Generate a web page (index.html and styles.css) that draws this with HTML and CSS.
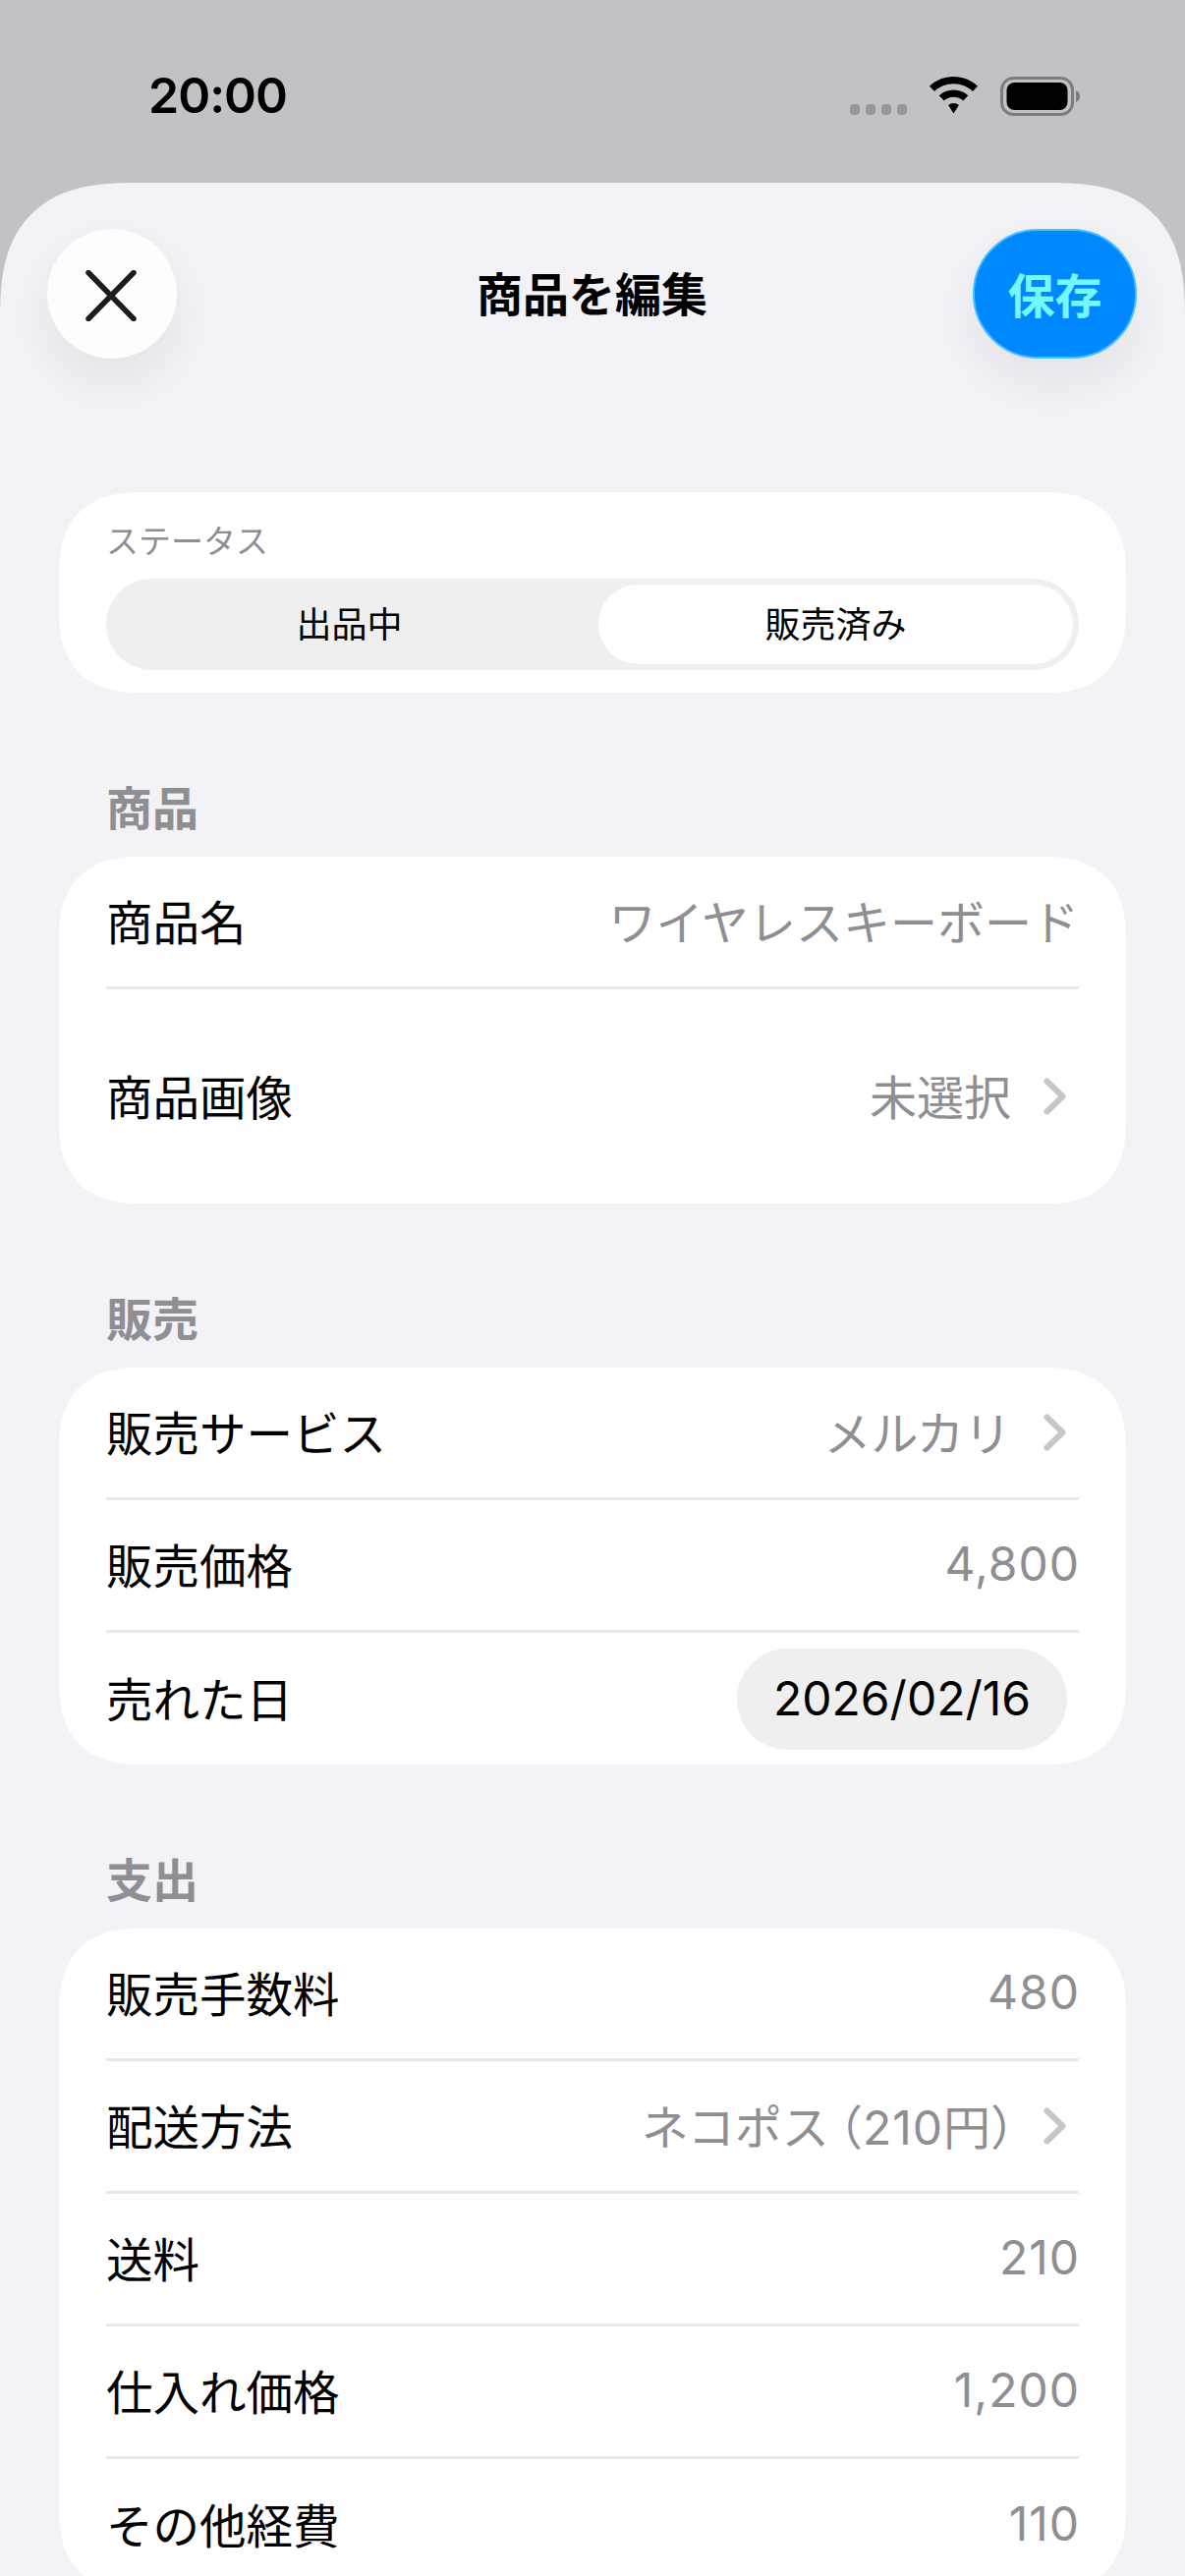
FILE: index.html
```html
<!DOCTYPE html>
<html lang="ja">
<head>
<meta charset="utf-8">
<title>商品を編集</title>
<link rel="stylesheet" href="styles.css">
</head>
<body>
<div class="status-bar">
  <span class="time">20:00</span>
  <div class="status-icons">
    <div class="dots"><i></i><i></i><i></i><i></i></div>
    <svg class="wifi" width="51" height="38" viewBox="0 0 50 38"><path d="M25 0C15.500 0 7 3.600 0.500 9.700L5.500 15C10.500 10.200 17.400 7.300 25 7.300S39.500 10.200 44.500 15L49.500 9.700C43 3.600 34.500 0 25 0Z"/><path d="M25 13.500C19.300 13.500 14.100 15.700 10.200 19.300L15.200 24.600C17.800 22.300 21.200 20.800 25 20.800S32.200 22.300 34.800 24.600L39.800 19.300C35.900 15.700 30.700 13.500 25 13.500Z"/><path d="M25 27C22.900 27 21 27.800 19.600 29L25 37.500L30.400 29C29 27.800 27.100 27 25 27Z"/></svg>
    <svg class="battery" width="82" height="40" viewBox="0 0 82 40"><rect x="1.500" y="1.500" width="72" height="37" rx="12" fill="none" stroke="#7d7d81" stroke-width="3"/><rect x="6.500" y="6" width="62" height="28" rx="8"/><path d="M77 14C79.500 15 81 17 81 20S79.500 25 77 26Z" fill="#7d7d81"/></svg>
  </div>
</div>
<main class="sheet">
  <header class="nav">
    <button class="close" aria-label="閉じる">
      <svg class="close-icon" width="52" height="52" viewBox="0 0 52 52"><path d="M3 2.500L49 49.500M49 2.500L3 49.500" fill="none" stroke="#1c1c1e" stroke-width="5.500" stroke-linecap="round"/></svg>
    </button>
    <h1 class="title">商品を編集</h1>
    <button class="save">保存</button>
  </header>

  <section class="card status-card">
    <div class="status-label">ステータス</div>
    <div class="segment">
      <div class="seg-item">出品中</div>
      <div class="seg-item seg-active">販売済み</div>
    </div>
  </section>

  <h2 class="section-title">商品</h2>
  <section class="card">
    <div class="row"><span>商品名</span><span class="value">ワイヤレスキーボード</span></div>
    <div class="row row-tall"><span>商品画像</span><span class="value">未選択<svg class="chev" width="24" height="38" viewBox="0 0 24 38"><path d="M3.500 3.500L19.500 19L3.500 34.500" fill="none" stroke="#c6c6c8" stroke-width="6" stroke-linecap="round" stroke-linejoin="round"/></svg></span></div>
  </section>

  <h2 class="section-title">販売</h2>
  <section class="card">
    <div class="row"><span>販売サービス</span><span class="value">メルカリ<svg class="chev" width="24" height="38" viewBox="0 0 24 38"><path d="M3.500 3.500L19.500 19L3.500 34.500" fill="none" stroke="#c6c6c8" stroke-width="6" stroke-linecap="round" stroke-linejoin="round"/></svg></span></div>
    <div class="row"><span>販売価格</span><span class="value num">4,800</span></div>
    <div class="row row-date"><span class="date-label">売れた日</span><span class="date">2026/02/16</span></div>
  </section>

  <h2 class="section-title">支出</h2>
  <section class="card">
    <div class="row"><span>販売手数料</span><span class="value num">480</span></div>
    <div class="row"><span>配送方法</span><span class="value"><span class="value-text">ネコポス<span class="paren paren-open">（</span><span class="inline-num">210</span>円<span class="paren paren-close">）</span></span><svg class="chev" width="24" height="38" viewBox="0 0 24 38"><path d="M3.500 3.500L19.500 19L3.500 34.500" fill="none" stroke="#c6c6c8" stroke-width="6" stroke-linecap="round" stroke-linejoin="round"/></svg></span></div>
    <div class="row"><span>送料</span><span class="value num">210</span></div>
    <div class="row"><span>仕入れ価格</span><span class="value num">1,200</span></div>
    <div class="row"><span>その他経費</span><span class="value num">110</span></div>
  </section>
</main>
</body>
</html>
```
FILE: styles.css
```css
* { box-sizing: border-box; }
html, body { margin: 0; height: 2622px; overflow: hidden; }
body {
  background: #c1c1c6;
  color: #000;
  font-family: Inter, "Noto Sans CJK JP", sans-serif;
}
.status-bar {
  height: 186px;
  padding: 64px 106px 0 151px;
  display: flex;
  justify-content: space-between;
  align-items: flex-start;
}
.time { font-size: 50px; font-weight: 600; line-height: 66px; letter-spacing: -1px; }
.status-icons { display: flex; align-items: flex-start; gap: 22px; padding-top: 14px; }
.dots { display: flex; gap: 6px; padding-top: 28px; }
.dots i { width: 10px; height: 11px; border-radius: 4px; background: #98989c; }
.sheet {
  height: 2436px;
  background: #f2f2f7;
  border-radius: 138px 138px 0 0;
  corner-shape: superellipse(1.4);
  padding: 47px 60px 0;
  overflow: hidden;
}
.nav {
  height: 132px;
  margin: 0 -11px 136px -12px;
  display: grid;
  grid-template-columns: 1fr auto 1fr;
  align-items: center;
}
.close, .save {
  border: 0;
  padding: 0;
  height: 132px;
  border-radius: 66px;
  font-family: inherit;
  box-shadow: 0 22px 56px rgba(0, 0, 0, .07);
}
.close {
  width: 132px;
  background: #fdfdfe;
  display: flex;
  align-items: center;
  justify-content: center;
}
.close-icon { margin: 4px 3px 0 0; }
.save {
  justify-self: end;
  width: 167px;
  padding-bottom: 2px;
  background: #0088ff;
  border: 2px solid #3fc0ff;
  color: #74f6ff;
  font-size: 48px;
  font-weight: 700;
}
.title { margin: 2px 0 0; font-size: 47px; font-weight: 700; line-height: 60px; }
.card { background: #fff; border-radius: 84px; corner-shape: superellipse(1.3); padding: 0 48px; }
.status-card { height: 204px; padding-top: 32px; }
.status-label { font-size: 33px; line-height: 36px; color: #8e8e93; }
.segment {
  margin-top: 20px;
  height: 93px;
  background: #efeff0;
  border-radius: 47px;
  padding: 6px;
  display: flex;
}
.seg-item {
  flex: 1;
  padding-right: 12px;
  display: flex;
  align-items: center;
  justify-content: center;
  font-size: 36px;
  font-weight: 400;
  line-height: 1;
  border-radius: 41px;
}
.seg-active { flex: 0 0 483px; padding: 0; background: #fff; }
.section-title {
  margin: 90px 0 21px;
  padding-left: 48px;
  font-size: 47px;
  line-height: 56px;
  font-weight: 700;
  color: #8e8e93;
}
.row {
  height: 135px;
  padding-bottom: 4px;
  display: flex;
  align-items: center;
  justify-content: space-between;
  font-size: 47.500px;
  border-bottom: 3px solid #e8e8ea;
}
.row:last-child { border-bottom: 0; }
.row-tall { height: 218px; }
.value { display: flex; align-items: center; color: #8e8e93; font-size: 48px; white-space: nowrap; }
.value-text { white-space: nowrap; }
.num { letter-spacing: 1px; margin-right: -1px; }
.inline-num { letter-spacing: 1px; }
.paren { font-feature-settings: "halt"; }
.paren-open { margin-left: 10px; }
.paren-close { margin-right: -3px; }
.chev { margin: 3px 12px 0 33px; }
.row-date { padding-bottom: 0; height: 134px; }
.date-label { margin-bottom: 4px; }
.date {
  background: #efeff0;
  border-radius: 52px;
  width: 336px;
  height: 103px;
  margin-right: 12px;
  padding-bottom: 2px;
  display: flex;
  align-items: center;
  justify-content: center;
  font-size: 48px;
}
```
